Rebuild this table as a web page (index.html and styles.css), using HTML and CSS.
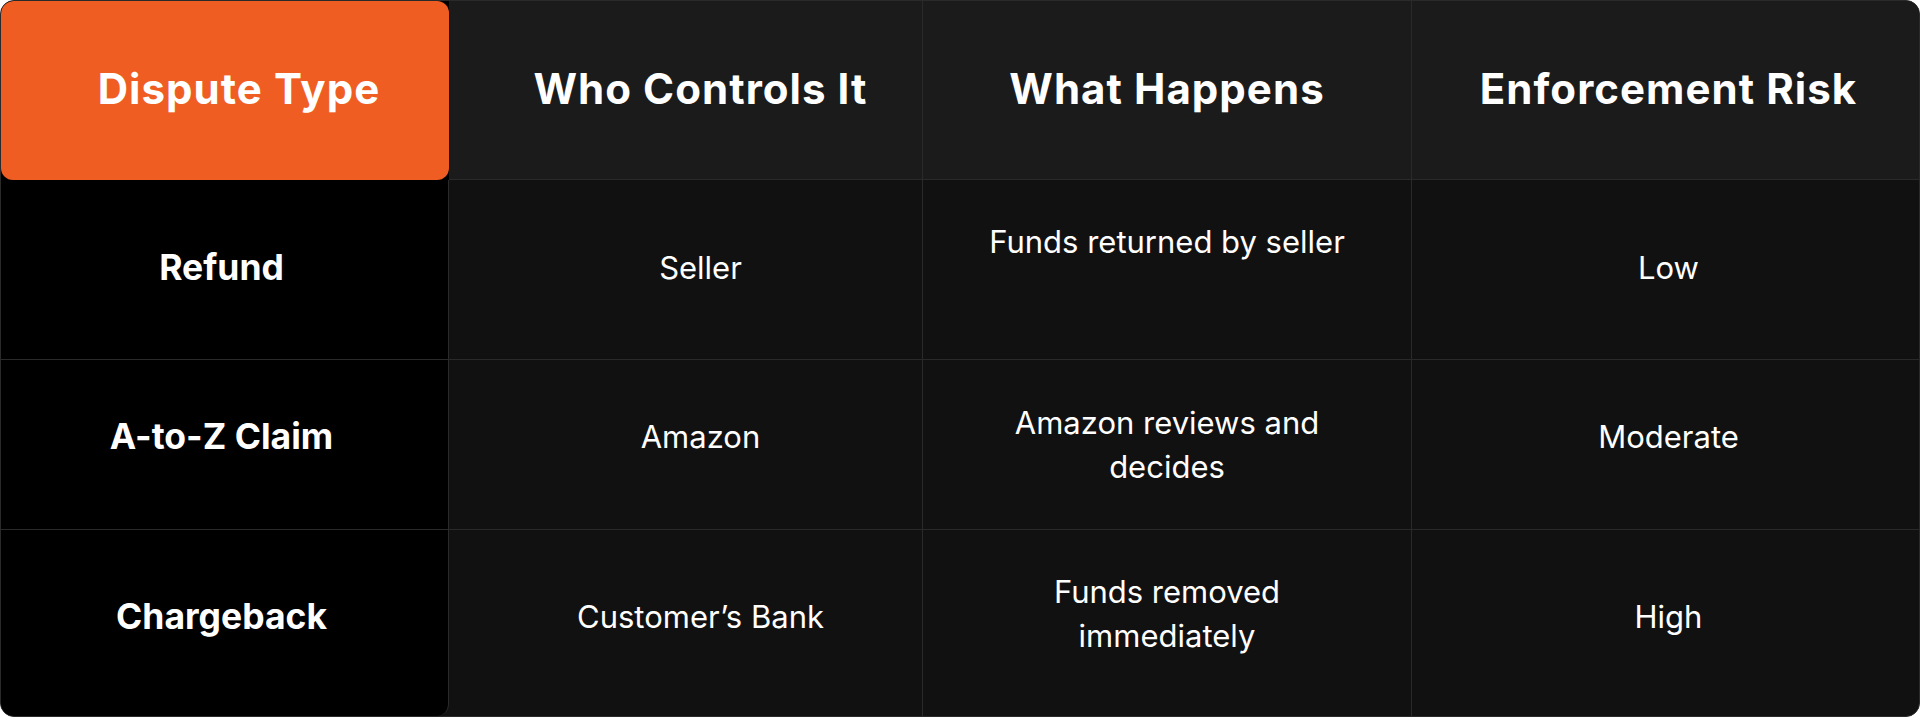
FILE: index.html
```html
<!DOCTYPE html>
<html lang="en">
<head>
<meta charset="utf-8">
<title>Dispute Types</title>
<link rel="stylesheet" href="styles.css">
</head>
<body>
<div class="table">
  <div class="th th-first"><div class="badge">Dispute Type</div></div>
  <div class="th th-c2">Who Controls It</div>
  <div class="th">What Happens</div>
  <div class="th th-c4 last">Enforcement Risk</div>

  <div class="td first r1">Refund</div>
  <div class="td c2 r1">Seller</div>
  <div class="td c3 r1 r1-c3">Funds returned by seller</div>
  <div class="td c4 r1 last">Low</div>

  <div class="td first r2">A-to-Z Claim</div>
  <div class="td c2 r2">Amazon</div>
  <div class="td c3 r2-c3">Amazon reviews and decides</div>
  <div class="td c4 r2 last">Moderate</div>

  <div class="td first r3 bl">Chargeback</div>
  <div class="td c2 r3 bottom">Customer’s Bank</div>
  <div class="td c3 r3-c3 bottom">Funds removed immediately</div>
  <div class="td c4 r3 last bottom">High</div>
</div>
</body>
</html>
```

FILE: styles.css
```css
* { box-sizing: border-box; }
html, body { margin: 0; padding: 0; background: #ffffff; }
body { width: 1920px; height: 727px; overflow: hidden; }

.table {
  width: 1920px;
  height: 717px;
  display: grid;
  grid-template-columns: 448px 474px 489px 1fr;
  grid-template-rows: 179px 180px 170px 186px;
  background: #111111;
  border: 1px solid #2a2a2a;
  border-radius: 14px;
  overflow: hidden;
  font-family: "Inter", "Liberation Sans", sans-serif;
  color: #ffffff;
}

.th {
  background: #1b1b1b;
  border-right: 1px solid #2a2a2a;
  border-bottom: 1px solid #2a2a2a;
  display: flex;
  align-items: center;
  justify-content: center;
  font-family: "Inter", "Liberation Sans", sans-serif;
  font-weight: 700;
  font-size: 42px;
  letter-spacing: 0.025em;
  padding-bottom: 4px;
}
.th-c2 { padding-left: 30px; }
.th-c4 { padding-left: 6px; }

.th-first {
  background: #000000;
  border: none;
  padding: 0;
}
.badge {
  width: 100%;
  height: 100%;
  background: #f05d22;
  border-radius: 12px;
  display: flex;
  align-items: center;
  justify-content: center;
  padding: 0 0 4px 28px;
}

.td {
  border-right: 1px solid #2a2a2a;
  border-bottom: 1px solid #2a2a2a;
  display: flex;
  align-items: center;
  justify-content: center;
  text-align: center;
  font-size: 31px;
  line-height: 44px;
  font-weight: 400;
}
.last { border-right: none; }
.bottom { border-bottom: none; }

.first {
  background: #000000;
  font-size: 35.5px;
  font-weight: 700;
  padding-right: 6px;
}
.bl {
  border-bottom: none;
  border-bottom-left-radius: 12px;
  border-bottom-right-radius: 12px;
}

.c2 { padding-left: 30px; }
.c3 { padding-left: 56px; padding-right: 56px; }
.c4 { padding-left: 6px; }

.r1 { padding-bottom: 4px; }
.r1-c3 { padding-bottom: 56px; }
.r2 { padding-bottom: 16px; }
.r2-c3 { padding-bottom: 0; }
.r3 { padding-bottom: 12px; }
.r3-c3 { padding-bottom: 18px; }
```
